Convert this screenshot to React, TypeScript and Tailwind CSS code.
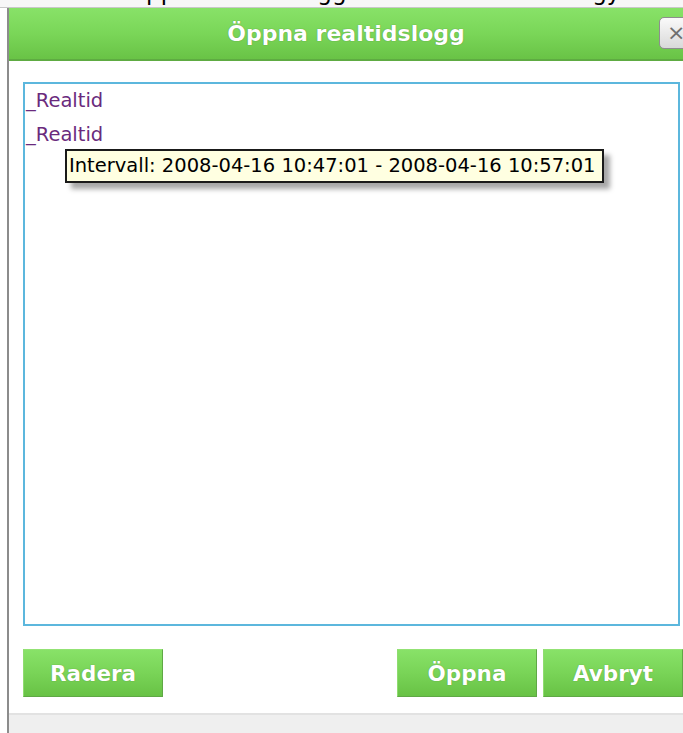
import React from 'react';

const logs = ['_Realtid', '_Realtid'];

const GreenButton: React.FC<{ label: string }> = ({ label }) => (
  <button className="h-[48px] w-[140px] pt-[3px] bg-gradient-to-b from-[#88e268] via-[#79d457] to-[#68c245] border border-[#5fa845] border-t-[#93e274] border-l-[#8fdc70] text-white font-bold text-[21.5px] font-['DejaVu_Sans',sans-serif] [text-shadow:0_0_1px_rgba(40,90,30,0.6)]">
    {label}
  </button>
);

const App: React.FC = () => {
  return (
    <div className="w-[683px] h-[733px] bg-white overflow-hidden flex flex-col font-['DejaVu_Sans',sans-serif]">
      {/* window caption, mostly scrolled out of view */}
      <div className="h-[8px] shrink-0 overflow-hidden bg-[#f7f7f7] border-b border-[#c8c8c8]">
        <div className="mt-[-19px] leading-[23px] text-[23px] text-black whitespace-nowrap pl-[128px]">
          <span>Öppna realtidslogg</span>
          <span className="ml-[145px]">Technology</span>
        </div>
      </div>

      <div className="flex-1 ml-[7px] border-l-2 border-[#8c8c8c] flex flex-col">
        {/* title bar */}
        <div className="h-[53px] shrink-0 relative flex items-center justify-center bg-gradient-to-b from-[#88e268] via-[#7ad658] to-[#69c346] border-b-2 border-[#5eab42]">
          <span className="text-white font-bold text-[22px] [text-shadow:0_0_1px_rgba(40,90,30,0.7)]">Öppna realtidslogg</span>
          <div className="absolute left-[650px] top-[9px] w-[34px] h-[32px] rounded-[5px] border border-[#8e8e8e] bg-gradient-to-b from-[#fafafa] to-[#d9d9d9] flex items-center pl-[7px] text-[#6f6f6f] text-[22px] leading-none">
            ×
          </div>
        </div>

        {/* log list */}
        <div className="flex-1 bg-white flex flex-col">
          <div className="mt-[21px] ml-[14px] mr-[3px] h-[544px] border-2 border-[#5cb7dd] relative">
            {logs.map((name, i) => (
              <div key={i} className="h-[34px] leading-[34px] pl-[1px] text-[19.5px] text-[#6a2a7d]">
                {name}
              </div>
            ))}
            <div className="absolute left-[40px] top-[65px] w-[539px] h-[34px] bg-[#ffffe1] border-2 border-[#1a1a1a] shadow-[6px_6px_5px_rgba(0,0,0,0.35)] flex items-center pl-[2px] text-[19.5px] text-black whitespace-nowrap">
              Intervall: 2008-04-16 10:47:01 - 2008-04-16 10:57:01
            </div>
          </div>

          {/* actions */}
          <div className="mt-[23px] ml-[14px] flex items-center">
            <GreenButton label="Radera" />
            <div className="ml-auto flex gap-[6px]">
              <GreenButton label="Öppna" />
              <GreenButton label="Avbryt" />
            </div>
          </div>
          <div className="h-[16px]" />
        </div>

        {/* status strip */}
        <div className="h-[20px] shrink-0 bg-[#efefef] border-t-2 border-[#e2e2e2]" />
      </div>
    </div>
  );
};

export default App;
